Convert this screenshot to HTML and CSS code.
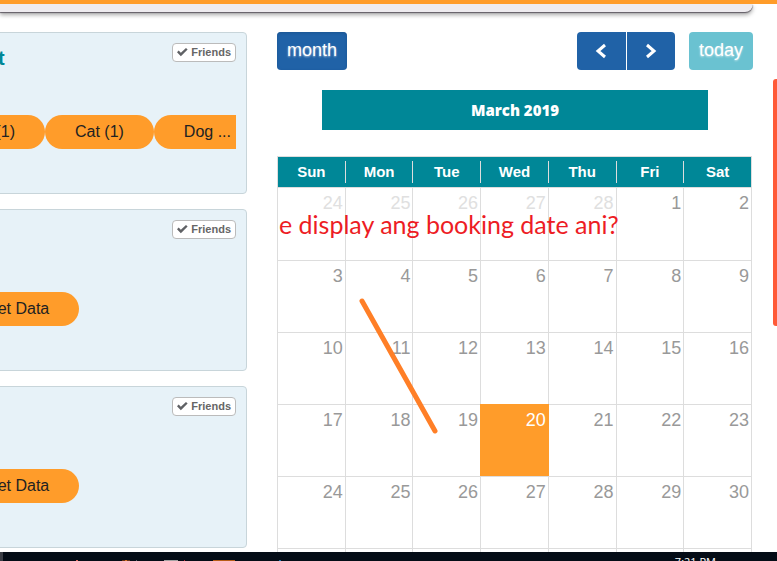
FILE: index.html
```html
<!DOCTYPE html>
<html lang="en">
<head>
<meta charset="utf-8">
<meta name="viewport" content="width=device-width, initial-scale=1">
<title>Booking calendar</title>
<link rel="stylesheet" href="styles.css">
</head>
<body>
<header class="topbar"></header>
<div class="panel-edge"></div>
<div class="layout">
  <aside class="sidebar">
    <article class="card">
      <div class="card-head">
        <h2 class="card-title">Brett</h2>
        <button class="badge" type="button"><svg class="check" viewBox="0 0 12 10" aria-hidden="true"><path d="M0 5.2 1.8 3.4 4.2 5.7 9.8.5 11.6 2.2 4.2 9.5Z"/></svg>Friends</button>
      </div>
      <div class="chips chips-end"><span class="chip">Bird (1)</span><span class="chip">Cat (1)</span><span class="chip chip-cut">Dog ...</span></div>
    </article>
    <article class="card">
      <div class="card-head">
        <h2 class="card-title"></h2>
        <button class="badge" type="button"><svg class="check" viewBox="0 0 12 10" aria-hidden="true"><path d="M0 5.2 1.8 3.4 4.2 5.7 9.8.5 11.6 2.2 4.2 9.5Z"/></svg>Friends</button>
      </div>
      <div class="chips"><span class="chip">Pet Data</span></div>
    </article>
    <article class="card">
      <div class="card-head">
        <h2 class="card-title"></h2>
        <button class="badge" type="button"><svg class="check" viewBox="0 0 12 10" aria-hidden="true"><path d="M0 5.2 1.8 3.4 4.2 5.7 9.8.5 11.6 2.2 4.2 9.5Z"/></svg>Friends</button>
      </div>
      <div class="chips"><span class="chip">Pet Data</span></div>
    </article>
  </aside>
  <main class="calendar">
    <div class="toolbar">
      <button class="btn" type="button">month</button>
      <div class="group">
        <button class="btn btn-nav" type="button" aria-label="Previous month"><svg class="arrow" viewBox="0 0 12 16" aria-hidden="true"><path d="M10 2 3 8 10 14"/></svg></button>
        <button class="btn btn-nav" type="button" aria-label="Next month"><svg class="arrow" viewBox="0 0 12 16" aria-hidden="true"><path d="M2 2 9 8 2 14"/></svg></button>
      </div>
      <button class="btn btn-today" type="button" disabled>today</button>
    </div>
    <h1 class="month-title">March 2019</h1>
    <div class="month">
      <table class="days">
        <thead>
          <tr><th><span>Sun</span></th><th><span>Mon</span></th><th><span>Tue</span></th><th><span>Wed</span></th><th><span>Thu</span></th><th><span>Fri</span></th><th><span>Sat</span></th></tr>
        </thead>
        <tbody>
          <tr><td class="other">24</td><td class="other">25</td><td class="other">26</td><td class="other">27</td><td class="other">28</td><td>1</td><td>2</td></tr>
          <tr><td>3</td><td>4</td><td>5</td><td>6</td><td>7</td><td>8</td><td>9</td></tr>
          <tr><td>10</td><td>11</td><td>12</td><td>13</td><td>14</td><td>15</td><td>16</td></tr>
          <tr><td>17</td><td>18</td><td>19</td><td class="today">20</td><td>21</td><td>22</td><td>23</td></tr>
          <tr><td>24</td><td>25</td><td>26</td><td>27</td><td>28</td><td>29</td><td>30</td></tr>
          <tr><td></td><td></td><td></td><td></td><td></td><td></td><td></td></tr>
        </tbody>
      </table>
      <p class="note">e display ang booking date ani?</p>
      <svg class="stroke" viewBox="0 0 80 140" aria-hidden="true"><path d="M3 4 76 134"/></svg>
    </div>
  </main>
</div>
<div class="side-tab"></div>
<footer class="taskbar">
  <svg class="task-icons" viewBox="0 0 300 9" aria-hidden="true">
    <path fill="#3a3d45" d="M0 0h3v9H0z"/>
    <path fill="#d9675f" d="M76 8h2v1h-2z"/>
    <path fill="#6b3516" d="M122 8h8v1h-8z"/>
    <path fill="#d9752a" d="M125 8h2v1h-2z"/>
    <path fill="#59616b" d="M136 8h1v1h-1z"/>
    <path fill="#a2a2a2" d="M164 8h14v1h-14z"/>
    <path fill="#b52a35" d="M184 8h1v1h-1z"/>
    <path fill="#b85d18" d="M213 8h22v1h-22z"/>
    <path fill="#1979b8" d="M279 8h2v1h-2z"/>
  </svg>
  <time class="clock">7:21 PM</time>
</footer>
</body>
</html>
```

FILE: styles.css
```css
* { box-sizing: border-box; }

body {
  margin: 0;
  height: 100vh;
  display: flex;
  flex-direction: column;
  overflow: hidden;
  background: #fff;
  font-family: "Liberation Sans", Arial, sans-serif;
}

.topbar {
  flex: none;
  height: 4px;
  background: #ff9c2a;
}

.panel-edge {
  flex: none;
  height: 8px;
  margin-right: 24px;
  background: #eeebef;
  border-radius: 0 0 12px 0;
  box-shadow: 0 1px 1px #625d65, 0 3px 4px #aaa;
  clip-path: inset(0 -8px -10px 0);
}

.layout {
  flex: 1;
  min-height: 0;
  overflow: hidden;
  display: grid;
  grid-template-columns: 247px minmax(0, 1fr);
  gap: 30px;
  padding: 20px 24px 0 0;
  clip-path: inset(8px 0 0 0);
}

.sidebar {
  display: flex;
  flex-direction: column;
  gap: 15px;
  margin-left: -54px;
}

.card {
  flex: none;
  min-height: 162px;
  padding: 10px;
  background: #e7f2f8;
  border: 1px solid #c8d5da;
  border-radius: 4px;
}

.card-head {
  display: flex;
  justify-content: space-between;
  align-items: flex-start;
  min-height: 72px;
}

.card-title {
  margin: 3px 0 0 1px;
  font-size: 20px;
  line-height: 24px;
  color: #008797;
}

.badge {
  display: flex;
  align-items: center;
  gap: 3px;
  height: 19px;
  padding: 0 4px 1px;
  border: 1px solid #bbb;
  border-radius: 4px;
  background: #fff;
  color: #666;
  font: bold 11px/16px "Liberation Sans", Arial, sans-serif;
}

.check {
  width: 11px;
  height: 10px;
  fill: #5f6165;
}

.chips {
  display: flex;
  overflow: hidden;
}

.chips-end { justify-content: flex-end; }

.chip {
  flex: none;
  padding: 0 30px;
  border-radius: 17px;
  background: #ff9c2a;
  color: #222;
  font-size: 16px;
  line-height: 34px;
  white-space: nowrap;
}

.chip-cut {
  padding-right: 5px;
  border-radius: 17px 0 0 17px;
}

.toolbar {
  display: flex;
  align-items: center;
  gap: 14px;
}

.group {
  display: flex;
  gap: 1px;
  margin-left: auto;
}

.btn {
  height: 38px;
  padding: 0 10px 2px;
  border: 0;
  border-radius: 4px;
  background: #2062a7;
  box-shadow: inset 0 1px 3px #1b5591;
  color: #fff;
  font: 18px/20px "Liberation Sans", Arial, sans-serif;
  text-shadow: 0 1px 2px #ffffff99;
}

.btn-nav {
  display: grid;
  place-items: center;
  width: 49px;
  padding: 0;
  border-radius: 4px 0 0 4px;
  box-shadow: none;
}

.btn-nav + .btn-nav {
  width: 48px;
  border-radius: 0 4px 4px 0;
}

.arrow {
  width: 12px;
  height: 16px;
  fill: none;
  stroke: #fff;
  stroke-width: 3;
}

.btn-today {
  background: #6ac2d1;
  box-shadow: none;
}

.month-title {
  margin: 20px 45px 26px;
  background: #008797;
  color: #fff;
  font: 800 15px/40px "Open Sans", sans-serif;
  text-align: center;
}

.month {
  position: relative;
  padding-right: 1px;
}

.days {
  width: 100%;
  table-layout: fixed;
  border-collapse: separate;
  border-spacing: 0;
  border: 1px solid #ddd;
  border-width: 1px 1px 0 0;
}

.days th {
  padding: 4px 0;
  background: #008797;
  color: #fff;
  font-size: 15px;
  line-height: 22px;
}

.days th span {
  display: block;
  border-left: 1px solid #ddd;
}

.days th:first-child { border-left: 1px solid #ddd; }

.days th:first-child span { border-left: 0; }

.days td {
  height: 72px;
  padding: 5px 2px 0 0;
  border: 1px solid #ddd;
  border-width: 1px 0 0 1px;
  color: #999;
  font-size: 18px;
  line-height: 20px;
  text-align: right;
  vertical-align: top;
}

.days tbody tr:first-child td { height: 73px; }

.days .other { color: #e0e0e0; }

.days .today {
  position: relative;
  background: #ff9c2a;
  border-color: #ff9c2a;
  box-shadow: 1px 0 #ff9c2a;
  color: #fff;
}

.note {
  position: absolute;
  left: 2px;
  top: 52px;
  margin: 0;
  color: #ed1c24;
  font: 25px/32px Lato, sans-serif;
  white-space: nowrap;
}

.stroke {
  position: absolute;
  left: 82px;
  top: 141px;
  width: 80px;
  height: 140px;
  fill: none;
  stroke: #ff7f27;
  stroke-width: 5;
  stroke-linecap: round;
}

.side-tab {
  position: fixed;
  right: 0;
  top: 79px;
  width: 4px;
  height: 247px;
  border-radius: 3px 0 0 3px;
  background: #ff5a38;
}

.taskbar {
  position: relative;
  flex: none;
  display: flex;
  justify-content: space-between;
  height: 9px;
  overflow: hidden;
  padding-right: 61px;
  background: #040c16;
  color: #fff;
}

.task-icons {
  width: 300px;
  height: 9px;
}

.clock {
  padding-top: 3px;
  font: 11px/14px "Open Sans", sans-serif;
}
```
